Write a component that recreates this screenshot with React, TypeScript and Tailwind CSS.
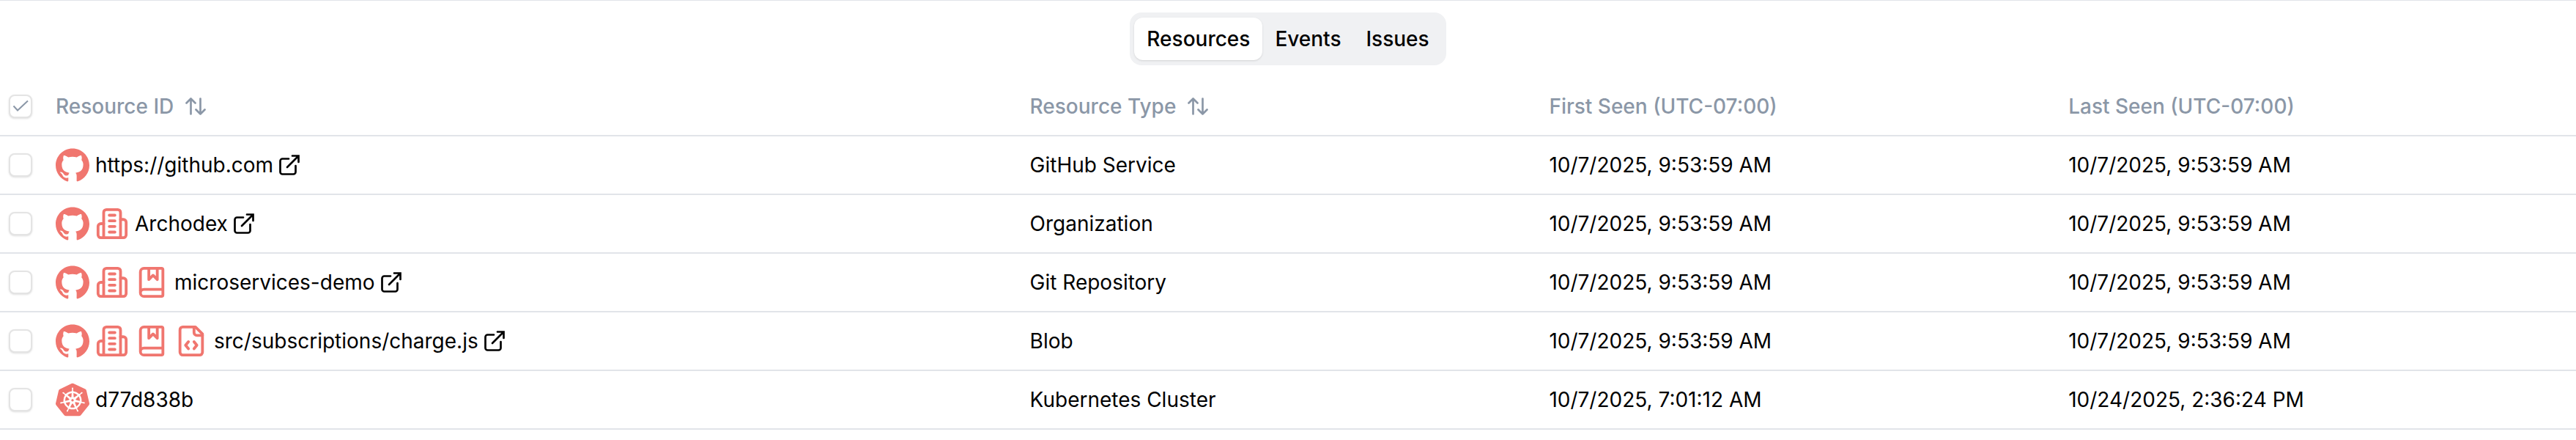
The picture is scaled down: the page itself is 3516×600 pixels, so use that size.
import type { ReactNode } from "react";
import { SiGithub, SiKubernetes } from "react-icons/si";

type IconName = "github" | "org" | "repo" | "file" | "kubernetes";

type Resource = {
  id: string;
  icons: IconName[];
  type: string;
  firstSeen: string;
  lastSeen: string;
  external: boolean;
};

const resources: Resource[] = [
  { id: "https://github.com", icons: ["github"], type: "GitHub Service", firstSeen: "10/7/2025, 9:53:59 AM", lastSeen: "10/7/2025, 9:53:59 AM", external: true },
  { id: "Archodex", icons: ["github", "org"], type: "Organization", firstSeen: "10/7/2025, 9:53:59 AM", lastSeen: "10/7/2025, 9:53:59 AM", external: true },
  { id: "microservices-demo", icons: ["github", "org", "repo"], type: "Git Repository", firstSeen: "10/7/2025, 9:53:59 AM", lastSeen: "10/7/2025, 9:53:59 AM", external: true },
  { id: "src/subscriptions/charge.js", icons: ["github", "org", "repo", "file"], type: "Blob", firstSeen: "10/7/2025, 9:53:59 AM", lastSeen: "10/7/2025, 9:53:59 AM", external: true },
  { id: "d77d838b", icons: ["kubernetes"], type: "Kubernetes Cluster", firstSeen: "10/7/2025, 7:01:12 AM", lastSeen: "10/24/2025, 2:36:24 PM", external: false },
];

const tabs = ["Resources", "Events", "Issues"];

const StrokeIcon = ({ children }: { children: ReactNode }) => (
  <svg viewBox="0 0 24 24" className="size-[46px]" fill="none" stroke="currentColor" strokeWidth={2} strokeLinecap="round" strokeLinejoin="round">
    {children}
  </svg>
);

const ResourceIcon = ({ name }: { name: IconName }) => {
  switch (name) {
    case "github":
      return <SiGithub className="size-[46px]" />;
    case "kubernetes":
      return <SiKubernetes className="size-[46px]" />;
    case "org":
      return (
        <StrokeIcon>
          <path d="M6 22V4a2 2 0 0 1 2-2h8a2 2 0 0 1 2 2v18Z" />
          <path d="M6 12H4a2 2 0 0 0-2 2v6a2 2 0 0 0 2 2h2" />
          <path d="M18 9h2a2 2 0 0 1 2 2v9a2 2 0 0 1-2 2h-2" />
          <path d="M10 6h4M10 10h4M10 14h4M10 18h4" />
        </StrokeIcon>
      );
    case "repo":
      return (
        <StrokeIcon>
          <path d="M10 2v8l3-3 3 3V2" />
          <path d="M4 19.5v-15A2.5 2.5 0 0 1 6.5 2H19a1 1 0 0 1 1 1v18a1 1 0 0 1-1 1H6.5a1 1 0 0 1 0-5H20" />
        </StrokeIcon>
      );
    case "file":
      return (
        <StrokeIcon>
          <path d="M10 12.5 8 15l2 2.5" />
          <path d="m14 12.5 2 2.5-2 2.5" />
          <path d="M14 2v4a2 2 0 0 0 2 2h4" />
          <path d="M15 2H6a2 2 0 0 0-2 2v16a2 2 0 0 0 2 2h12a2 2 0 0 0 2-2V7z" />
        </StrokeIcon>
      );
  }
};

const ExternalIcon = () => (
  <svg viewBox="0 0 28 28" className="size-7" fill="none" stroke="currentColor" strokeWidth={2.7} strokeLinecap="round">
    <path d="M13 5.5H4.5a3 3 0 0 0-3 3v15a3 3 0 0 0 3 3h15a3 3 0 0 0 3-3V15" />
    <path d="M11 17 26 2M18 1.5h8.5V10" />
  </svg>
);

const SortIcon = () => (
  <svg viewBox="0 0 28 24" className="h-6 w-7" fill="none" stroke="currentColor" strokeWidth={2.7} strokeLinecap="round" strokeLinejoin="round">
    <path d="M7.5 22.5v-21M1.5 7.5l6-6 6 6" />
    <path d="M20.5 1.5v21M14.5 16.5l6 6 6-6" />
  </svg>
);

const Checkbox = ({ label, checked = false }: { label: string; checked?: boolean }) => (
  <label className="relative flex size-8">
    <input
      type="checkbox"
      aria-label={label}
      defaultChecked={checked}
      className="peer size-8 appearance-none rounded-lg border-2 border-[#e4e4e4] bg-white shadow-sm"
    />
    <svg viewBox="0 0 32 32" className="pointer-events-none absolute inset-0 hidden text-[#8b97a7] peer-checked:block" fill="none" stroke="currentColor" strokeWidth={2}>
      <path d="M6.5 15.5 12 21.5 26 8.5" />
    </svg>
  </label>
);

const App = () => {
  return (
    <main className="border-t border-[#e1e4e9] bg-white pt-4 font-['Inter',sans-serif] text-[28px] leading-10 text-black">
      <div className="flex justify-center">
        <div role="tablist" className="flex h-[72px] items-center rounded-2xl bg-[#f0f1f3] px-[6px] font-medium">
          {tabs.map((tab, i) => (
            <button
              key={tab}
              type="button"
              role="tab"
              aria-selected={i === 0}
              className="h-[58px] rounded-xl px-[17px] aria-selected:bg-white aria-selected:shadow"
            >
              {tab}
            </button>
          ))}
        </div>
      </div>

      <table className="mt-4 w-full table-fixed border-collapse text-left">
        <thead>
          <tr className="h-20 border-b-2 border-[#e1e4e9] text-[#8b97a7]">
            <th className="w-[60px] pl-3">
              <Checkbox label="Select all" checked />
            </th>
            <th className="px-4 font-medium">
              <button type="button" className="flex items-center gap-4">
                Resource ID
                <SortIcon />
              </button>
            </th>
            <th className="w-[20.16%] px-4 font-medium">
              <button type="button" className="flex items-center gap-4">
                Resource Type
                <SortIcon />
              </button>
            </th>
            <th className="w-[20.16%] px-4 font-medium">First Seen (UTC-07:00)</th>
            <th className="w-[20.16%] px-4 font-medium">Last Seen (UTC-07:00)</th>
          </tr>
        </thead>
        <tbody>
          {resources.map((resource) => (
            <tr key={resource.id} className="h-20 border-b-2 border-[#e1e4e9]">
              <td className="pl-3">
                <Checkbox label={`Select ${resource.id}`} />
              </td>
              <td className="px-4">
                <div className="flex items-center gap-2">
                  {resource.icons.map((name) => (
                    <span key={name} className="text-[#f0766f]">
                      <ResourceIcon name={name} />
                    </span>
                  ))}
                  {resource.external ? (
                    <a href="#" className="flex items-center gap-2">
                      {resource.id}
                      <ExternalIcon />
                    </a>
                  ) : (
                    <span>{resource.id}</span>
                  )}
                </div>
              </td>
              <td className="px-4">{resource.type}</td>
              <td className="px-4">{resource.firstSeen}</td>
              <td className="px-4">{resource.lastSeen}</td>
            </tr>
          ))}
        </tbody>
      </table>
    </main>
  );
};

export default App;
